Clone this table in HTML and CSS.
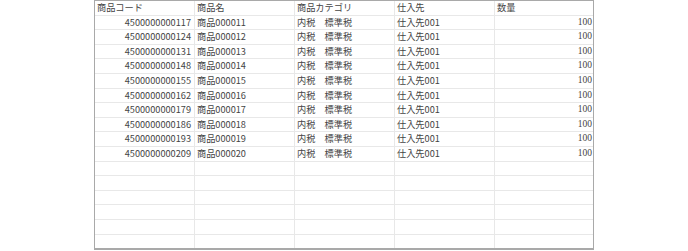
FILE: index.html
```html
<!DOCTYPE html>
<html lang="ja">
<head>
<meta charset="utf-8">
<link rel="stylesheet" href="styles.css">
</head>
<body>
<div class="sheet">
  <div class="row head">
    <div class="cell">商品コード</div>
    <div class="cell">商品名</div>
    <div class="cell">商品カテゴリ</div>
    <div class="cell">仕入先</div>
    <div class="cell">数量</div>
  </div>
  <div class="row"><div class="cell num">4500000000117</div><div class="cell">商品000011</div><div class="cell">内税　標準税</div><div class="cell">仕入先001</div><div class="cell qty">100</div></div>
  <div class="row"><div class="cell num">4500000000124</div><div class="cell">商品000012</div><div class="cell">内税　標準税</div><div class="cell">仕入先001</div><div class="cell qty">100</div></div>
  <div class="row"><div class="cell num">4500000000131</div><div class="cell">商品000013</div><div class="cell">内税　標準税</div><div class="cell">仕入先001</div><div class="cell qty">100</div></div>
  <div class="row"><div class="cell num">4500000000148</div><div class="cell">商品000014</div><div class="cell">内税　標準税</div><div class="cell">仕入先001</div><div class="cell qty">100</div></div>
  <div class="row"><div class="cell num">4500000000155</div><div class="cell">商品000015</div><div class="cell">内税　標準税</div><div class="cell">仕入先001</div><div class="cell qty">100</div></div>
  <div class="row"><div class="cell num">4500000000162</div><div class="cell">商品000016</div><div class="cell">内税　標準税</div><div class="cell">仕入先001</div><div class="cell qty">100</div></div>
  <div class="row"><div class="cell num">4500000000179</div><div class="cell">商品000017</div><div class="cell">内税　標準税</div><div class="cell">仕入先001</div><div class="cell qty">100</div></div>
  <div class="row"><div class="cell num">4500000000186</div><div class="cell">商品000018</div><div class="cell">内税　標準税</div><div class="cell">仕入先001</div><div class="cell qty">100</div></div>
  <div class="row"><div class="cell num">4500000000193</div><div class="cell">商品000019</div><div class="cell">内税　標準税</div><div class="cell">仕入先001</div><div class="cell qty">100</div></div>
  <div class="row"><div class="cell num">4500000000209</div><div class="cell">商品000020</div><div class="cell">内税　標準税</div><div class="cell">仕入先001</div><div class="cell qty">100</div></div>
  <div class="row"><div class="cell"></div><div class="cell"></div><div class="cell"></div><div class="cell"></div><div class="cell"></div></div>
  <div class="row"><div class="cell"></div><div class="cell"></div><div class="cell"></div><div class="cell"></div><div class="cell"></div></div>
  <div class="row"><div class="cell"></div><div class="cell"></div><div class="cell"></div><div class="cell"></div><div class="cell"></div></div>
  <div class="row"><div class="cell"></div><div class="cell"></div><div class="cell"></div><div class="cell"></div><div class="cell"></div></div>
  <div class="row"><div class="cell"></div><div class="cell"></div><div class="cell"></div><div class="cell"></div><div class="cell"></div></div>
  <div class="row"><div class="cell"></div><div class="cell"></div><div class="cell"></div><div class="cell"></div><div class="cell"></div></div>
  <div class="row"><div class="cell"></div><div class="cell"></div><div class="cell"></div><div class="cell"></div><div class="cell"></div></div>
</div>
</body>
</html>
```
FILE: styles.css
```css
html, body {
  margin: 0;
  padding: 0;
  background: #ffffff;
}
body {
  font-family: "Noto Sans CJK JP", "Noto Sans", sans-serif;
  font-size: 9.2px;
  color: #444444;
}
.sheet {
  box-sizing: border-box;
  width: 500px;
  height: 250px;
  margin: 0 auto;
  border: 1px solid #a9a9a9;
  border-width: 1px 1px 2px 1px;
  overflow: hidden;
}
.row {
  display: grid;
  grid-template-columns: 100px 100px 100px 100px 98px;
  height: 14.6px;
}
.cell {
  box-sizing: border-box;
  border-right: 1px solid #e8e8e8;
  border-bottom: 1px solid #e8e8e8;
  padding: 0 3px 0 2px;
  line-height: 13.6px;
  white-space: nowrap;
  overflow: hidden;
}
.cell:last-child {
  border-right: none;
}
.num {
  text-align: right;
}
.qty {
  text-align: right;
  padding-right: 1px;
  font-family: "Liberation Serif", serif;
  font-size: 9.5px;
}
```
